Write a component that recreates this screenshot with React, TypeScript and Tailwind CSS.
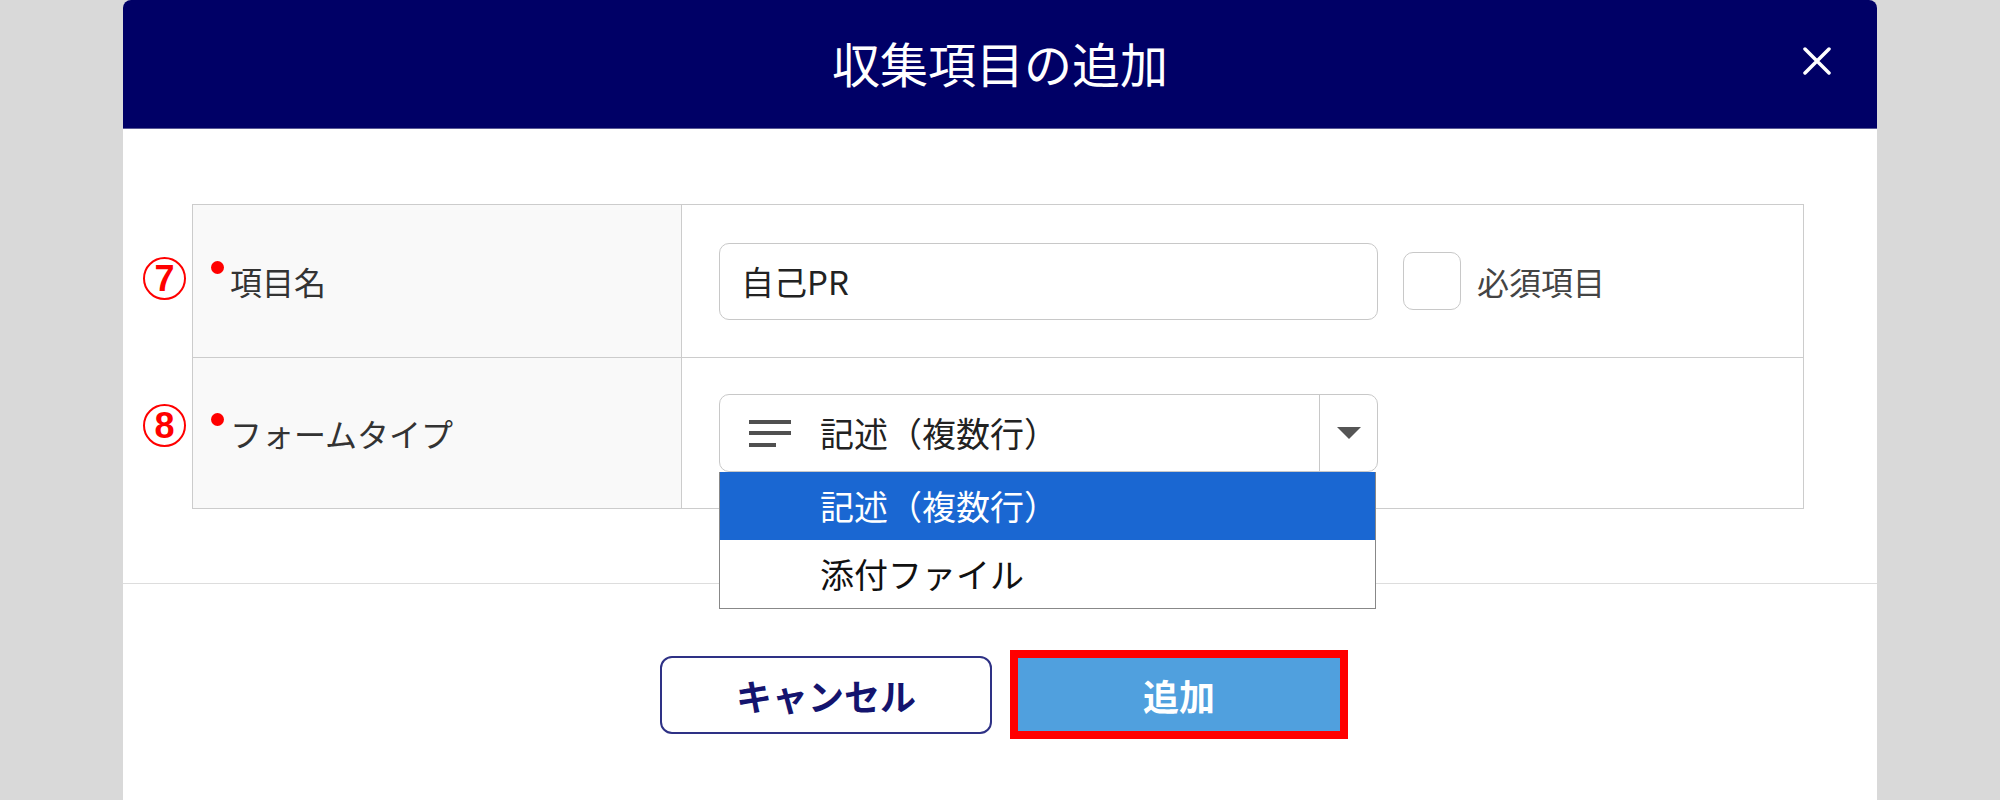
import React from "react";

const jp = { fontFamily: '"Noto Sans CJK JP", "Noto Sans", sans-serif' };

function Marker({ n, className }: { n: string; className: string }) {
  return (
    <span
      className={
        "absolute left-[-50px] flex h-[43px] w-[43px] items-center justify-center rounded-full border-2 border-[#ff0000] text-[36px] font-bold leading-none text-[#ff0000] " +
        className
      }
      style={{ fontFamily: '"Liberation Sans", Arial, sans-serif' }}
    >
      {n}
    </span>
  );
}

function Label({ children }: { children: React.ReactNode }) {
  return (
    <div className="flex h-full items-center bg-[#f9f9f9] pl-[18px] border-r border-[#cccccc]">
      <span className="relative top-[-14px] mr-[6px] h-[13px] w-[13px] rounded-full bg-[#ff0000]" />
      <span className="text-[32px] leading-none text-[#333333]">{children}</span>
    </div>
  );
}

function LinesIcon() {
  return (
    <svg width="42" height="27" viewBox="0 0 42 27" className="shrink-0">
      <rect x="0" y="0" width="42" height="4" fill="#505050" />
      <rect x="0" y="11" width="42" height="4" fill="#505050" />
      <rect x="0" y="23" width="27" height="4" fill="#505050" />
    </svg>
  );
}

export default function App() {
  return (
    <div className="h-[800px] w-full overflow-hidden bg-[#d9d9d9]" style={jp}>
      <div className="mx-auto flex h-[800px] w-[1754px] flex-col overflow-hidden rounded-t-[8px] bg-white">
        {/* Header */}
        <div className="relative flex h-[129px] shrink-0 items-center justify-center border-b border-[#5a5a96] bg-[#000066]">
          <h1 className="relative top-[-2px] text-[48px] font-normal leading-none text-white">収集項目の追加</h1>
          <button className="absolute right-[46px] top-[47px] h-[28px] w-[28px]" type="button">
            <svg width="28" height="28" viewBox="0 0 28 28">
              <path d="M2 2 L26 26 M26 2 L2 26" stroke="white" strokeWidth="3.5" strokeLinecap="round" />
            </svg>
          </button>
        </div>

        {/* Body */}
        <div className="shrink-0 pb-[74px] pl-[69px] pt-[75px]">
          <div className="w-[1612px] border border-[#cccccc]">
            {/* Row 1 */}
            <div className="relative grid h-[153px] grid-cols-[489px_1fr] border-b border-[#cccccc]">
              <Marker n="7" className="top-[52px]" />
              <Label>項目名</Label>
              <div className="flex items-center pl-[37px]">
                <div className="flex h-[77px] w-[659px] items-center rounded-[10px] border border-[#c8c8c8] pl-[21px] text-[33px] leading-none text-[#222222]">
                  自己PR
                </div>
                <span className="ml-[25px] h-[58px] w-[58px] rounded-[10px] border border-[#c8c8c8] bg-white" />
                <span className="ml-[16px] text-[32px] leading-none text-[#444444]">必須項目</span>
              </div>
            </div>
            {/* Row 2 */}
            <div className="relative grid h-[150px] grid-cols-[489px_1fr]">
              <Marker n="8" className="top-[46px]" />
              <Label>フォームタイプ</Label>
              <div className="flex items-center pl-[37px]">
                <div className="relative w-[659px]">
                  <div className="flex h-[78px] items-center rounded-[10px] border border-[#c8c8c8] bg-white">
                    <div className="flex flex-1 items-center pl-[29px]">
                      <LinesIcon />
                      <span className="ml-[29px] text-[34px] leading-none text-[#222222]">記述（複数行）</span>
                    </div>
                    <div className="flex h-full w-[58px] items-center justify-center border-l border-[#c8c8c8]">
                      <svg width="24" height="12" viewBox="0 0 24 12">
                        <path d="M0 0 L24 0 L12 12 Z" fill="#555555" />
                      </svg>
                    </div>
                  </div>
                  {/* Open dropdown */}
                  <div className="absolute left-0 top-full z-10 w-[657px] border border-t-0 border-[#888888] bg-white">
                    <div className="flex h-[68px] items-center bg-[#1a67d2] pl-[100px] text-[34px] leading-none text-white">
                      記述（複数行）
                    </div>
                    <div className="flex h-[68px] items-center pl-[100px] text-[34px] leading-none text-[#111111]">
                      添付ファイル
                    </div>
                  </div>
                </div>
              </div>
            </div>
          </div>
        </div>

        {/* Footer */}
        <div className="flex shrink-0 justify-center gap-[26px] border-t border-[#dddddd] pt-[72px]">
          <button
            type="button"
            className="flex h-[78px] w-[332px] items-center justify-center rounded-[12px] border-[2.5px] border-[#2e3185] bg-white text-[36px] font-bold leading-none text-[#14146e]"
          >
            キャンセル
          </button>
          <button
            type="button"
            className="mt-[2px] flex h-[73px] w-[322px] items-center justify-center bg-[#50a0de] text-[36px] font-bold leading-none text-white outline-8 outline-solid outline-[#ff0000]"
          >
            追加
          </button>
        </div>
      </div>
    </div>
  );
}
